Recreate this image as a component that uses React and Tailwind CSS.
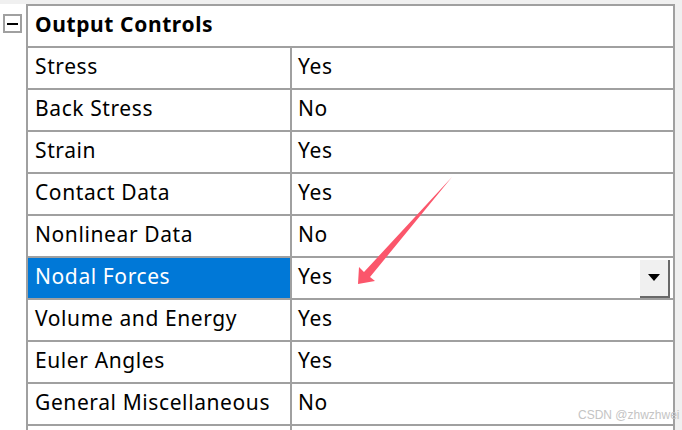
import React from 'react';

const rows = [
  { label: 'Stress', value: 'Yes' },
  { label: 'Back Stress', value: 'No' },
  { label: 'Strain', value: 'Yes' },
  { label: 'Contact Data', value: 'Yes' },
  { label: 'Nonlinear Data', value: 'No' },
  { label: 'Nodal Forces', value: 'Yes', selected: true },
  { label: 'Volume and Energy', value: 'Yes' },
  { label: 'Euler Angles', value: 'Yes' },
  { label: 'General Miscellaneous', value: 'No' },
  { label: '', value: '' },
];

const App = () => {
  return (
    <div
      className="relative w-[682px] h-[430px] overflow-hidden bg-[#f0f0f0] flex flex-col"
      style={{ fontFamily: '"Noto Sans", "Open Sans", sans-serif' }}
    >
      <div className="h-[4px] shrink-0" />
      <div className="flex flex-1">
        {/* Expand / collapse gutter */}
        <div className="w-[26px] bg-white pt-[10px] pl-[3px]">
          <div className="w-[19px] h-[19px] border-2 border-[#a0a0a0] flex items-center justify-center">
            <div className="w-[11px] h-[2px] bg-black" />
          </div>
        </div>

        {/* Property grid */}
        <div className="w-[649px] bg-white border-l-2 border-t-2 border-r-2 border-[#a0a0a0] text-[21px] tracking-[0.6px] text-black">
          <div className="h-[42px] border-b-2 border-[#a0a0a0] flex items-center pl-[7px] pb-[3px] font-bold">
            Output Controls
          </div>
          {rows.map((row, i) => (
            <div key={i} className="h-[42px] border-b-2 border-[#a0a0a0] flex">
              <div
                className={`w-[264px] border-r-2 border-[#a0a0a0] flex items-center pl-[7px] pb-[2px] whitespace-nowrap ${
                  row.selected ? 'bg-[#0078d7] text-white' : ''
                }`}
              >
                {row.label}
              </div>
              <div className="flex-1 flex items-center pl-[6px] pr-[3px]">
                <span className="flex-1 pb-[2px]">{row.value}</span>
                {row.selected && (
                  <div className="w-[30px] h-[38px] bg-[#f0f0f0] border-r-2 border-b-2 border-[#696969] flex items-center justify-center mt-[1px]">
                    <svg width="12" height="7" viewBox="0 0 12 7">
                      <polygon points="0,0 12,0 6,7" fill="#000" />
                    </svg>
                  </div>
                )}
              </div>
            </div>
          ))}
        </div>
        <div className="flex-1" />
      </div>

      {/* annotation arrow */}
      <svg className="absolute left-0 top-0 pointer-events-none" width="682" height="430">
        <polygon
          points="358,284 359,267 364,272 452,177 370,277 375,281"
          fill="#fb566b"
        />
      </svg>

      <div
        className="absolute left-[578px] top-[406px] text-[12px] text-[#c4c4c4] whitespace-nowrap"
        style={{ fontFamily: '"Liberation Sans", sans-serif' }}
      >
        CSDN @zhwzhwei
      </div>
    </div>
  );
};

export default App;
